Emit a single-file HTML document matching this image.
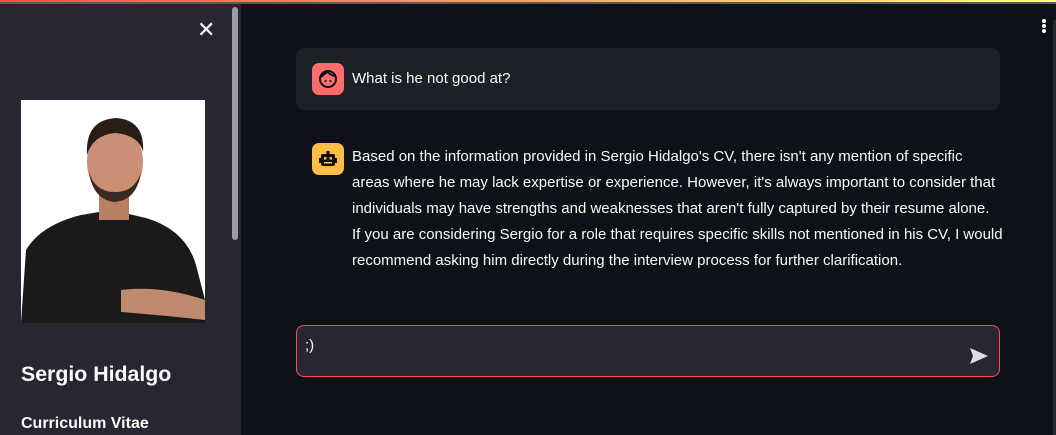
<!DOCTYPE html>
<html><head><meta charset="utf-8"><style>
*{margin:0;padding:0;box-sizing:border-box}
body{width:1056px;height:435px;overflow:hidden;background:#0e1117;font-family:"Liberation Sans",sans-serif;color:#fafafa;position:relative}
.top{position:absolute;left:0;top:0;width:1056px;height:2px;background:linear-gradient(90deg,#ff4b4b,#fffd80)}
.top2{position:absolute;left:0;top:2px;width:1056px;height:2px;background:#5a5a62}
.side{position:absolute;left:0;top:4px;width:231px;height:431px;background:#262730}
.sb{position:absolute;left:231px;top:4px;width:10px;height:431px;background:#262730}
.thumb{position:absolute;left:232px;top:7px;width:6px;height:233px;background:#9a9ca1;border-radius:3px}
.close{position:absolute;left:197px;top:19px;font-size:22px;color:#fafafa;line-height:1}
.photo{position:absolute;left:21px;top:100px;width:184px;height:223px;background:#fff;overflow:hidden}
.name{position:absolute;left:21px;top:362px;font-size:21.3px;font-weight:bold}
.cv{position:absolute;left:21px;top:415px;font-size:16px;font-weight:bold}
.dots{position:absolute;left:1042px;top:19px;width:4px}
.dots i{display:block;width:4px;height:4px;background:#fff;border-radius:2px;margin-bottom:1px}
.msg1{position:absolute;left:296px;top:48px;width:704px;height:62px;background:#1e2028;border-radius:8px}
.av{position:absolute;width:32px;height:32px;border-radius:7px}
.t{position:absolute;font-size:15px;line-height:26px;color:#fafafa;white-space:nowrap}
.inp{position:absolute;left:296px;top:325px;width:704px;height:52px;background:#262730;border:1px solid #ff4b4b;border-radius:8px}
.rs{position:absolute;left:1053px;top:20px;width:3px;height:415px;background:#262730}
</style></head><body>
<div class="top"></div><div class="top2"></div>
<div class="side"></div><div class="sb"></div><div class="thumb"></div>
<div class="close">✕</div>
<div class="photo"><svg width="184" height="223" viewBox="0 0 184 223">
<path d="M0 223 L5 150 Q20 125 60 115 L90 110 L125 118 Q165 130 175 165 L184 200 L184 223Z" fill="#1a1a1a"/>
<path d="M100 190 Q140 185 184 200 L184 220 Q140 215 100 212Z" fill="#c08a6e"/>
<rect x="78" y="85" width="30" height="35" fill="#b97f63"/>
<ellipse cx="94" cy="62" rx="28" ry="37" fill="#c99075"/>
<path d="M66 55 Q64 20 95 18 Q124 20 122 52 Q118 35 94 33 Q72 35 66 55Z" fill="#2a1d16"/>
<path d="M68 72 Q72 100 94 102 Q116 100 120 72 Q114 92 94 92 Q74 92 68 72Z" fill="#3a2a22"/>
</svg></div>
<div class="name">Sergio Hidalgo</div>
<div class="cv">Curriculum Vitae</div>
<div class="dots"><i></i><i></i><i></i></div>
<div class="rs"></div>
<div class="msg1"></div>
<div class="av" style="left:312px;top:63px;background:#ff6c6c"><svg width="32" height="32" viewBox="0 0 32 32"><circle cx="16" cy="16" r="8" fill="none" stroke="#0e1117" stroke-width="2"/><path d="M9 14 Q13 10 16 9 Q18 12 23 13" fill="none" stroke="#0e1117" stroke-width="2"/><circle cx="13.5" cy="18" r="1" fill="#0e1117"/><circle cx="18.5" cy="18" r="1" fill="#0e1117"/></svg></div>
<div class="t" style="left:352px;top:66px">What is he not good at?</div>
<div class="av" style="left:312px;top:143px;background:#ffbd45"><svg width="32" height="32" viewBox="0 0 32 32"><rect x="14.5" y="8" width="3" height="4" fill="#0e1117"/><rect x="9" y="11" width="14" height="12" rx="2" fill="#0e1117"/><rect x="7" y="15" width="2" height="5" fill="#0e1117"/><rect x="23" y="15" width="2" height="5" fill="#0e1117"/><rect x="12" y="14" width="2.5" height="2.5" fill="#ffbd45"/><rect x="17.5" y="14" width="2.5" height="2.5" fill="#ffbd45"/><rect x="12" y="19" width="8" height="1.5" fill="#ffbd45"/></svg></div>
<div class="t" style="left:352px;top:144px">Based on the information provided in Sergio Hidalgo's CV, there isn't any mention of specific<br>areas where he may lack expertise or experience. However, it's always important to consider that<br>individuals may have strengths and weaknesses that aren't fully captured by their resume alone.<br>If you are considering Sergio for a role that requires specific skills not mentioned in his CV, I would<br>recommend asking him directly during the interview process for further clarification.</div>
<div class="inp"></div>
<div class="t" style="left:305px;top:333px">;)</div>
<svg style="position:absolute;left:969px;top:347px" width="20" height="18" viewBox="0 0 20 18"><path d="M1 1 L19 9 L1 17 L4 9Z" fill="#dcdde2"/></svg>
</body></html>
